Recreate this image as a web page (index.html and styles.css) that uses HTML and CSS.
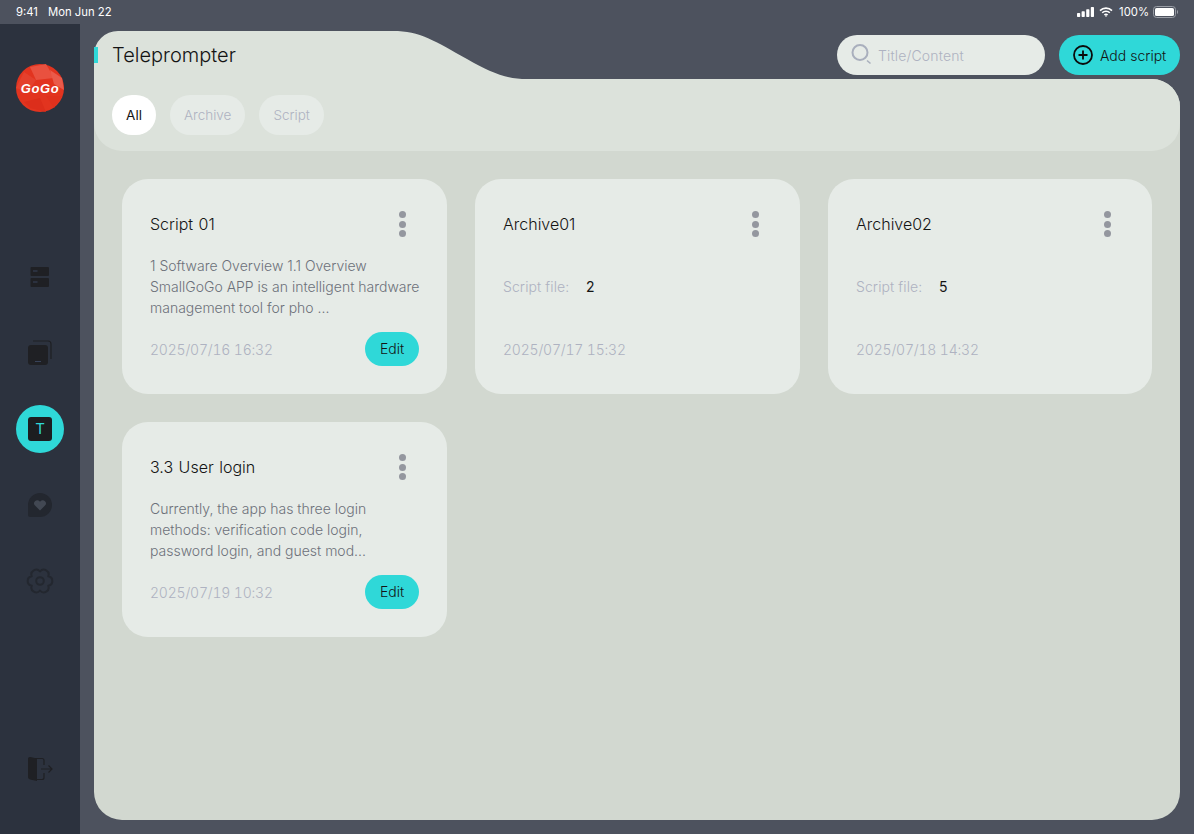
FILE: index.html
```html
<!DOCTYPE html>
<html lang="en">
<head>
  <meta charset="UTF-8"/>
  <meta name="viewport" content="width=device-width, initial-scale=1.0"/>
  <title>Teleprompter</title>
  <link rel="stylesheet" href="styles.css">
</head>
<body>

  <div class="status-bar">
    <div class="status-left">
      <span>9:41</span>
      <span>Mon Jun 22</span>
    </div>
    <div class="status-right">
      <svg width="17" height="10" viewBox="0 0 17 10">
        <rect x="0" y="6" width="3.200" height="4" rx="0.7" fill="#fff"/>
        <rect x="4.600" y="4.300" width="3.200" height="5.700" rx="0.7" fill="#fff"/>
        <rect x="9.200" y="2.200" width="3.200" height="7.800" rx="0.7" fill="#fff"/>
        <rect x="13.800" y="0" width="3.200" height="10" rx="0.7" fill="#fff"/>
      </svg>
      <svg width="14" height="10" viewBox="0 0 14 10" fill="none" stroke="#fff" stroke-width="1.6">
        <path d="M1 3.600a8.600 8.600 0 0 1 12 0"/>
        <path d="M3.200 5.800a5.400 5.400 0 0 1 7.600 0"/>
        <path d="M5.400 8a2.300 2.300 0 0 1 3.200 0"/>
        <path d="M7 10 5.900 8.700a1.600 1.600 0 0 1 2.200 0z" fill="#fff" stroke="none"/>
      </svg>
      <span class="battery-text">100%</span>
      <svg width="25" height="12" viewBox="0 0 25 12">
        <rect x="0.5" y="0.5" width="22" height="11" rx="3" fill="none" stroke="#9a9ea6"/>
        <rect x="2" y="2" width="19" height="8" rx="1.6" fill="#fff"/>
        <path d="M24 4v4a2 2 0 0 0 1-2 2 2 0 0 0-1-2z" fill="#9a9ea6"/>
      </svg>
    </div>
  </div>

  <div class="app">
    <aside class="sidebar">
      <div class="logo">
        <svg width="48" height="48" viewBox="0 0 48 48">
          <circle cx="24" cy="24" r="24" fill="#e2341f"/>
          <path d="M14 3 30 0 38 14 20 16z" fill="#e9513f"/>
          <path d="M34 6 46 14 48 26 38 20z" fill="#ea5a4a"/>
          <path d="M0 24 8 8 20 16 12 28z" fill="#e4402d"/>
          <path d="M8 38 24 34 30 48 14 44z" fill="#dc2e1b"/>
          <path d="M30 32 46 32 38 44z" fill="#e0311d"/>
          <text class="logo-text" x="24" y="28.500" text-anchor="middle">GoGo</text>
        </svg>
      </div>

      <nav class="nav">
        <div class="nav-item">
          <svg width="24" height="24" viewBox="0 0 24 24">
            <rect x="2.500" y="2" width="18.500" height="9" rx="1" fill="#1f2024"/>
            <rect x="2.500" y="13" width="18.500" height="9" rx="1" fill="#1f2024"/>
            <rect x="5" y="5.500" width="4.500" height="1" fill="#38435a"/>
            <rect x="5" y="16.500" width="4.500" height="1" fill="#38435a"/>
          </svg>
        </div>
        <div class="nav-item">
          <svg width="26" height="26" viewBox="0 0 26 26">
            <path d="M6 1h15a3 3 0 0 1 3 3v15" fill="none" stroke="#1f2024" stroke-width="1.200"/>
            <rect x="1" y="5" width="20" height="20" rx="3" fill="#1f2024"/>
            <rect x="8" y="21" width="6" height="1" fill="#38435a"/>
          </svg>
        </div>
        <div class="nav-item active">
          <span class="t-icon">T</span>
        </div>
        <div class="nav-item">
          <svg width="24" height="24" viewBox="0 0 24 24">
            <path d="M12 0a12 12 0 1 1 0 24H2a2 2 0 0 1-2-2V12A12 12 0 0 1 12 0z" fill="#23272f"/>
            <path d="M12 17.500 7 12.600a3.200 3.200 0 0 1 0-4.400 3.200 3.200 0 0 1 5 .6 3.200 3.200 0 0 1 5-.6 3.200 3.200 0 0 1 0 4.400z" fill="#424853"/>
          </svg>
        </div>
        <div class="nav-item">
          <svg width="28" height="28" viewBox="0 0 28 28" fill="none" stroke="#23272f" stroke-width="2" stroke-linejoin="round">
            <path d="M14 4.500A4.800 4.800 0 0 1 22.230 9.250 4.800 4.800 0 0 1 22.230 18.750 4.800 4.800 0 0 1 14 23.500 4.800 4.800 0 0 1 5.770 18.750 4.800 4.800 0 0 1 5.770 9.250 4.800 4.800 0 0 1 14 4.500z"/>
            <circle cx="14" cy="14" r="3.800"/>
          </svg>
        </div>
      </nav>

      <div class="nav-item logout">
        <svg width="26" height="26" viewBox="0 0 26 26">
          <path d="M3 2.500h12a2 2 0 0 1 2 2V9M17 17v4.500a2 2 0 0 1-2 2H9" fill="none" stroke="#1f2024" stroke-width="1.200"/>
          <path d="M1 3a2 2 0 0 1 2.500-2L10 2.500V25l-7-1.500A2.500 2.500 0 0 1 1 21.500z" fill="#1f2024"/>
          <path d="M14 13h11M21.500 9.500 25 13l-3.500 3.500" fill="none" stroke="#1f2024" stroke-width="1.200"/>
        </svg>
      </div>
    </aside>

    <main class="content">
      <header class="topbar">
        <svg class="tab-shape" width="434" height="48" viewBox="0 0 434 48">
          <path d="M0 48V24A24 24 0 0 1 24 0H299C326 0 341 10 373 28 396 41 411 48 433 48z" fill="#dce2db"/>
        </svg>
        <span class="tab-mark"></span>
        <h1 class="page-title">Teleprompter</h1>
        <div class="search">
          <svg width="22" height="22" viewBox="0 0 22 22" fill="none" stroke="#a9afbd">
            <circle cx="9" cy="8.500" r="7.500" stroke-width="2"/>
            <path d="M16 16.500 19.500 19.500" stroke-width="1.600"/>
          </svg>
          <span class="search-text">Title/Content</span>
        </div>
        <div class="add-btn">
          <svg width="20" height="20" viewBox="0 0 20 20" fill="none" stroke="#0b0b0b" stroke-width="1.800">
            <circle cx="10" cy="10" r="9"/>
            <path d="M10 5.500v9M5.500 10h9"/>
          </svg>
          <span>Add script</span>
        </div>
      </header>

      <section class="panel">
        <div class="filter-band">
          <div class="pill selected">All</div>
          <div class="pill">Archive</div>
          <div class="pill">Script</div>
        </div>

        <div class="card-grid">
          <div class="card">
            <div class="card-head">
              <span class="card-title">Script 01</span>
              <span class="more"><i></i><i></i><i></i></span>
            </div>
            <p class="card-text">1 Software Overview 1.1 Overview<br>SmallGoGo APP is an intelligent hardware<br>management tool for pho ...</p>
            <div class="card-foot">
              <span class="card-date">2025/07/16 16:32</span>
              <span class="edit-btn">Edit</span>
            </div>
          </div>

          <div class="card">
            <div class="card-head">
              <span class="card-title">Archive01</span>
              <span class="more"><i></i><i></i><i></i></span>
            </div>
            <div class="card-files"><span class="files-label">Script file:</span><span class="files-count">2</span></div>
            <div class="card-foot">
              <span class="card-date">2025/07/17 15:32</span>
            </div>
          </div>

          <div class="card">
            <div class="card-head">
              <span class="card-title">Archive02</span>
              <span class="more"><i></i><i></i><i></i></span>
            </div>
            <div class="card-files"><span class="files-label">Script file:</span><span class="files-count">5</span></div>
            <div class="card-foot">
              <span class="card-date">2025/07/18 14:32</span>
            </div>
          </div>

          <div class="card">
            <div class="card-head">
              <span class="card-title">3.3 User login</span>
              <span class="more"><i></i><i></i><i></i></span>
            </div>
            <p class="card-text">Currently, the app has three login<br>methods: verification code login,<br>password login, and guest mod...</p>
            <div class="card-foot">
              <span class="card-date">2025/07/19 10:32</span>
              <span class="edit-btn">Edit</span>
            </div>
          </div>
        </div>
      </section>
    </main>
  </div>

</body>
</html>
```

FILE: styles.css
```css
:root {
  --bg-color: #4d525e;
  --side-color: #2c323e;
  --panel-color: #d2d8d0;
  --band-color: #dce2db;
  --card-color: #e6ebe7;
  --accent-color: #2fd8d8;
  --muted-color: #aeb2c1;
}

* {
  box-sizing: border-box;
}

body {
  margin: 0;
  height: 834px;
  overflow: hidden;
  display: flex;
  flex-direction: column;
  background-color: var(--bg-color);
  color: #141414;
  font-family: 'Inter', 'Noto Sans', sans-serif;
  font-weight: 300;
  font-size: 14px;
}

.status-bar {
  height: 24px;
  flex-shrink: 0;
  display: flex;
  align-items: center;
  justify-content: space-between;
  padding: 0 16px;
  color: #fff;
  font-size: 11.3px;
  font-weight: 400;
}

.status-left {
  display: flex;
  gap: 10px;
}

.status-right {
  display: flex;
  align-items: center;
  gap: 5px;
}

.battery-text {
  margin-left: 1px;
  margin-right: -1px;
}

.app {
  flex: 1;
  display: flex;
  min-height: 0;
}

/* Sidebar */
.sidebar {
  width: 80px;
  flex-shrink: 0;
  display: flex;
  flex-direction: column;
  align-items: center;
  padding: 40px 0 41px;
  background-color: var(--side-color);
}

.logo {
  width: 48px;
  height: 48px;
}

.logo svg {
  display: block;
}

.logo-text {
  fill: #fff;
  font-family: 'Liberation Sans', sans-serif;
  font-size: 13px;
  font-weight: 700;
  font-style: italic;
  letter-spacing: 0.6px;
}

.nav {
  display: flex;
  flex-direction: column;
  gap: 28px;
  margin-top: 141px;
}

.nav-item {
  width: 48px;
  height: 48px;
  border-radius: 50%;
  display: flex;
  align-items: center;
  justify-content: center;
}

.nav-item.active {
  background-color: var(--accent-color);
}

.t-icon {
  width: 24px;
  height: 24px;
  border-radius: 3px;
  background-color: #1c1d20;
  color: var(--accent-color);
  font-size: 15px;
  font-weight: 400;
  line-height: 24px;
  text-align: center;
}

.logout {
  margin-top: auto;
}

/* Main area */
.content {
  flex: 1;
  min-width: 0;
  display: flex;
  flex-direction: column;
  padding: 0 14px 14px;
}

.topbar {
  position: relative;
  height: 55px;
  flex-shrink: 0;
  display: flex;
  align-items: center;
  padding-top: 11px;
  padding-bottom: 4px;
}

.tab-shape {
  position: absolute;
  top: 7px;
  left: 0;
}

.tab-mark {
  position: absolute;
  top: 23px;
  left: 0;
  width: 4px;
  height: 16px;
  background-color: var(--accent-color);
}

.page-title {
  position: relative;
  margin: 0 auto 0 18px;
  font-size: 20px;
  font-weight: 300;
}

.search {
  width: 208px;
  height: 40px;
  border-radius: 20px;
  background-color: var(--card-color);
  display: flex;
  align-items: center;
  gap: 5px;
  padding-left: 14px;
}

.search-text {
  color: var(--muted-color);
  letter-spacing: 0.15px;
}

.add-btn {
  width: 121px;
  height: 40px;
  margin-left: 14px;
  border-radius: 20px;
  background-color: var(--accent-color);
  display: flex;
  align-items: center;
  gap: 7px;
  padding-left: 14px;
}

.panel {
  flex: 1;
  min-height: 0;
  background-color: var(--panel-color);
  border-radius: 0 28px 28px 28px;
}

.filter-band {
  display: flex;
  gap: 14px;
  padding: 16px 18px;
  background-color: var(--band-color);
  border-radius: 0 28px 28px 28px;
}

.pill {
  min-width: 44px;
  height: 40px;
  padding: 0 14px;
  border-radius: 20px;
  background-color: var(--card-color);
  color: var(--muted-color);
  font-size: 13.5px;
  line-height: 40px;
  text-align: center;
}

.pill.selected {
  background-color: #fff;
  color: #141414;
  font-weight: 400;
}

.card-grid {
  display: grid;
  grid-template-columns: 325px 325px 324px;
  gap: 28px;
  padding: 28px;
}

.card {
  height: 215px;
  padding: 28px;
  border-radius: 26px;
  background-color: var(--card-color);
  display: flex;
  flex-direction: column;
}

.card-head {
  height: 34px;
  display: flex;
  align-items: center;
  justify-content: space-between;
}

.card-title {
  font-size: 16px;
  word-spacing: 1px;
}

.more {
  display: flex;
  flex-direction: column;
  gap: 2.5px;
  margin-right: 13px;
}

.more i {
  width: 7px;
  height: 7px;
  border-radius: 50%;
  background-color: #94979f;
}

.card-text {
  height: 63px;
  margin: 14px 0;
  color: #6d717a;
  line-height: 21px;
  white-space: nowrap;
}

.card-files {
  height: 63px;
  margin: 14px 0;
  display: flex;
  align-items: center;
}

.files-label {
  width: 83px;
  color: var(--muted-color);
  letter-spacing: 0.1px;
}

.files-count {
  color: #141414;
  font-weight: 400;
}

.card-foot {
  height: 34px;
  display: flex;
  align-items: center;
  justify-content: space-between;
}

.card-date {
  color: var(--muted-color);
  font-variant-numeric: tabular-nums;
  letter-spacing: -0.2px;
}

.edit-btn {
  width: 54px;
  height: 34px;
  border-radius: 17px;
  background-color: var(--accent-color);
  line-height: 34px;
  text-align: center;
}
```
